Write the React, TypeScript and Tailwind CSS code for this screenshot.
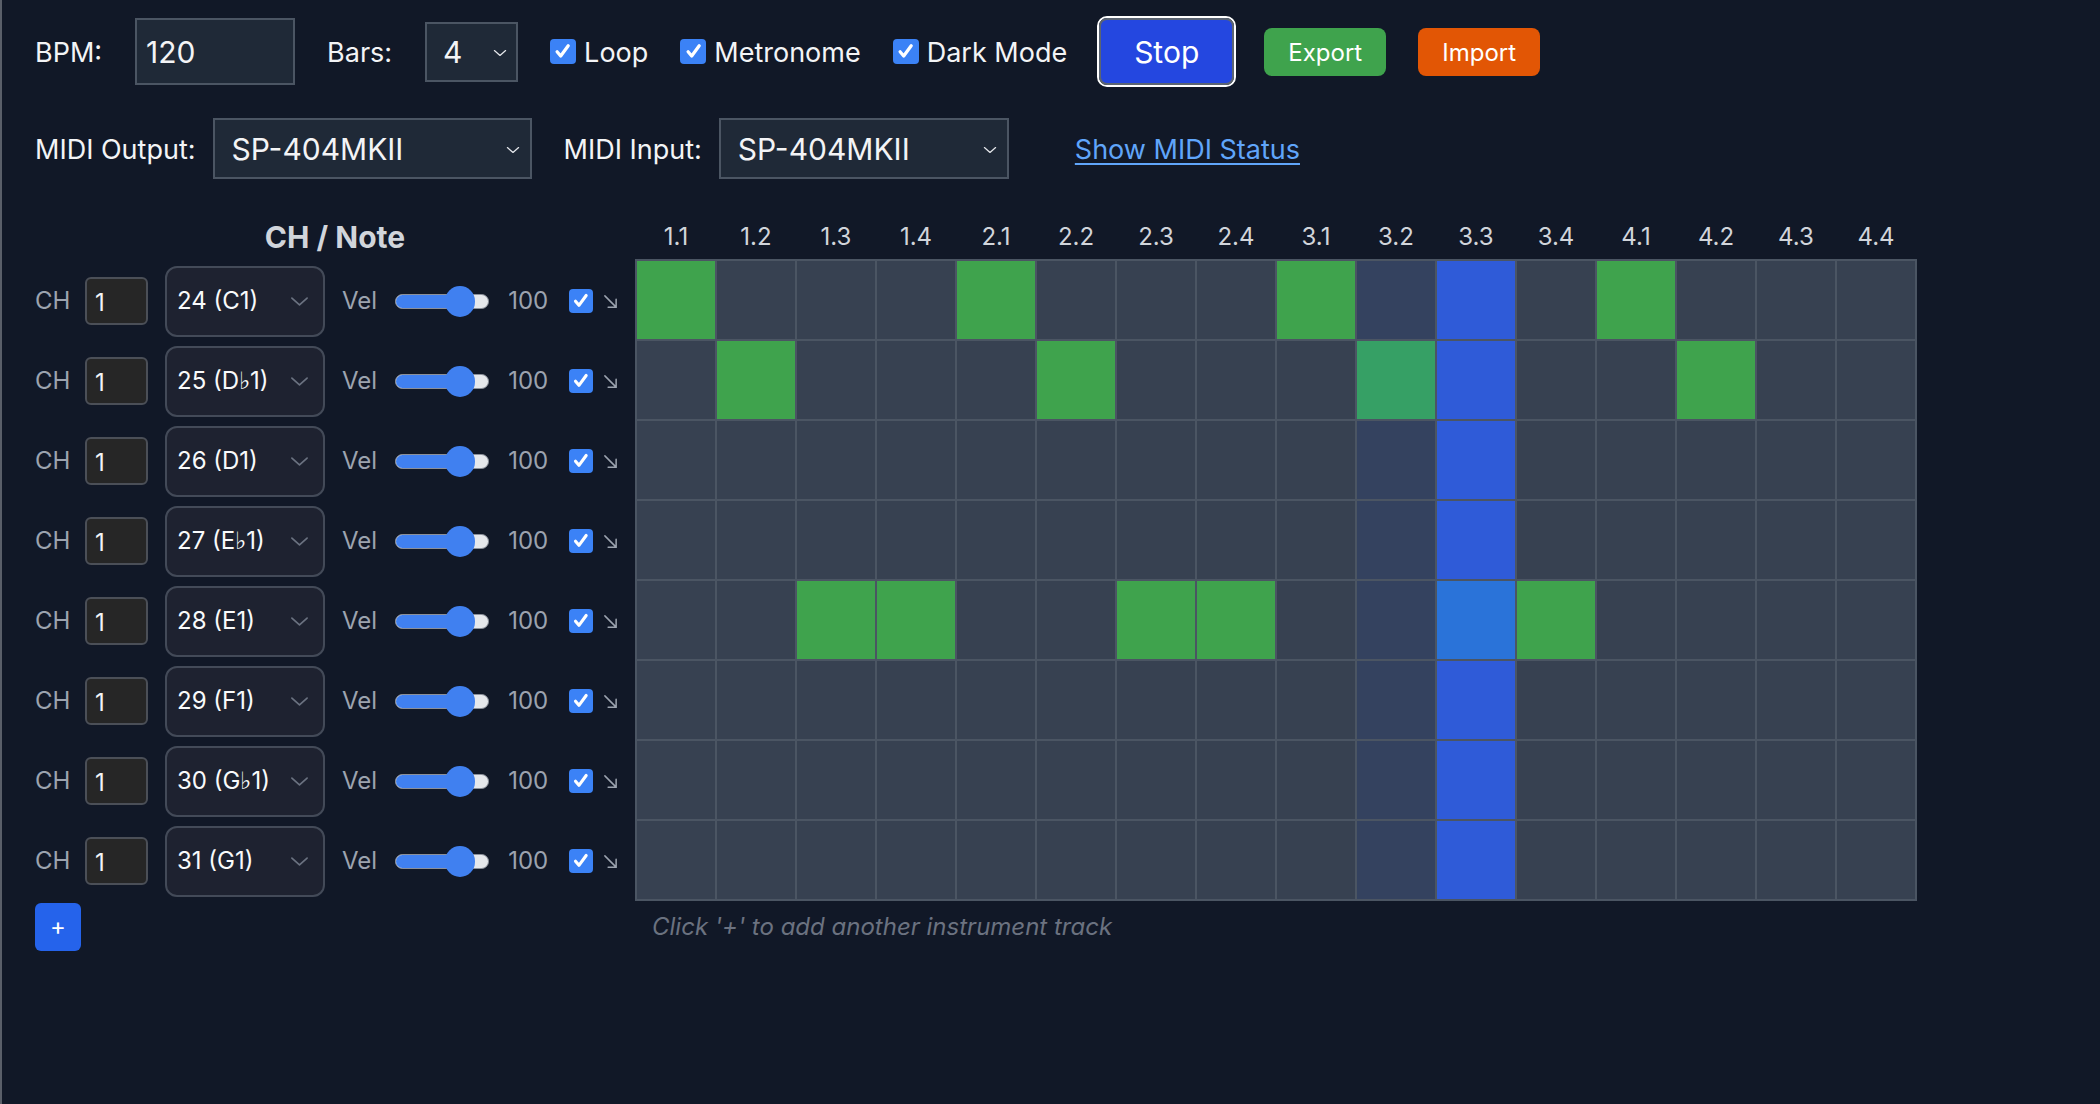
import { useState } from "react";

const COLS = [
  "1.1", "1.2", "1.3", "1.4",
  "2.1", "2.2", "2.3", "2.4",
  "3.1", "3.2", "3.3", "3.4",
  "4.1", "4.2", "4.3", "4.4",
];

const TRACKS = [
  { note: "24 (C1)", steps: [0, 4, 8, 12] },
  { note: "25 (D♭1)", steps: [1, 5, 9, 13] },
  { note: "26 (D1)", steps: [] },
  { note: "27 (E♭1)", steps: [] },
  { note: "28 (E1)", steps: [2, 3, 6, 7, 10, 11] },
  { note: "29 (F1)", steps: [] },
  { note: "30 (G♭1)", steps: [] },
  { note: "31 (G1)", steps: [] },
];

const PLAYHEAD = 10;

function cellColor(active: boolean, col: number) {
  if (col === PLAYHEAD) return active ? "bg-[#2a73d9]" : "bg-[#2f5bd8]";
  if (col === PLAYHEAD - 1) return active ? "bg-[#36a065]" : "bg-[#34425f]";
  return active ? "bg-[#3fa34d]" : "bg-[#374151]";
}

function Check({ className }: { className: string }) {
  return (
    <span
      className={`flex shrink-0 items-center justify-center rounded-[4px] bg-[#3b82f6] ${className}`}
    >
      <svg viewBox="0 0 24 24" className="h-[82%] w-[82%]" fill="none" stroke="white" strokeWidth="3.8" strokeLinecap="round" strokeLinejoin="round">
        <path d="M5.5 12.5l4.2 5L18.5 5.5" />
      </svg>
    </span>
  );
}

function Chevron({ className, color }: { className: string; color: string }) {
  return (
    <svg viewBox="0 0 20 11" className={className} fill="none" stroke={color} strokeWidth="1.8" strokeLinecap="round" strokeLinejoin="round">
      <path d="M2 2l8 7 8-7" />
    </svg>
  );
}

function VelSlider({ value }: { value: number }) {
  // 94px track, 30px thumb
  const left = Math.round((value / 127) * 64);
  return (
    <div className="relative ml-[18px] flex h-[31px] w-[94px] items-center">
      <div className="relative h-[15px] w-full overflow-hidden rounded-full border border-[#8b909a] bg-[#e5e7eb]">
        <div className="absolute inset-y-0 left-0 bg-[#4080f0]" style={{ width: left + 15 }} />
      </div>
      <div className="absolute top-0 h-[31px] w-[30px] rounded-full bg-[#4080f0]" style={{ left }} />
    </div>
  );
}

function TrackRow({ note }: { note: string }) {
  return (
    <div className="flex h-[80px] items-center pt-[2px] text-[24px]">
      <span className="w-[50px] text-[#9ca3af]">CH</span>
      <div className="flex h-[48px] w-[63px] items-center rounded-[6px] border-2 border-[#4b4f57] bg-[#262626] pl-[8px] pt-[3px] text-[#f3f4f6]">
        1
      </div>
      <div className="ml-[17px] flex h-[71px] w-[160px] items-center justify-between rounded-[12px] border-2 border-[#434a58] bg-[#1e2230] pl-[10px] pr-[14px] text-[#f9fafb]">
        <span>{note}</span>
        <Chevron className="h-[11px] w-[19px]" color="#6b7280" />
      </div>
      <span className="ml-[17px] text-[#9ca3af]">Vel</span>
      <VelSlider value={100} />
      <span className="ml-[19px] text-[#9ca3af]">100</span>
      <Check className="ml-[21px] h-[24px] w-[24px]" />
      <svg viewBox="0 0 16 16" className="ml-[10px] h-[15px] w-[15px]" fill="none" stroke="#9ca3af" strokeWidth="1.6" strokeLinecap="round">
        <path d="M2 2l12 12M14 5.5V14H5.5" />
      </svg>
    </div>
  );
}

export default function App() {
  const [playing] = useState(true);

  return (
    <div className="min-h-screen w-full border-l-2 border-[#5a5f69] bg-[#111827] pl-[33px] pt-[16px] font-[family-name:Inter,sans-serif] text-[#f3f4f6]">
      {/* transport row */}
      <div className="flex h-[71px] items-center text-[27px]">
        <span className="pt-[4px]">BPM:</span>
        <div className="ml-[33px] flex h-[67px] w-[160px] items-center border-2 border-[#4b5563] bg-[#1f2937] pl-[9px] pt-[2px] text-[30px]">
          120
        </div>
        <span className="ml-[32px] pt-[4px]">Bars:</span>
        <div className="ml-[33px] flex h-[60px] w-[93px] items-center justify-between border-2 border-[#4b5563] bg-[#1f2937] pl-[16px] pr-[9px] pt-[2px] text-[30px]">
          <span>4</span>
          <Chevron className="h-[8px] w-[14px]" color="#e5e7eb" />
        </div>
        <Check className="ml-[32px] h-[25px] w-[26px]" />
        <span className="ml-[8px] pt-[4px]">Loop</span>
        <Check className="ml-[32px] h-[25px] w-[26px]" />
        <span className="ml-[8px] pt-[4px]">Metronome</span>
        <Check className="ml-[32px] h-[25px] w-[26px]" />
        <span className="ml-[8px] pt-[4px]">Dark Mode</span>
        <button className="ml-[30px] h-[71px] w-[139px] rounded-[10px] border-2 border-white p-0">
          <span className="flex h-full w-full items-center justify-center rounded-[8px] border-2 border-[#5b6472] bg-[#2447e0] pt-[2px] text-[30px] text-white">
            {playing ? "Stop" : "Play"}
          </span>
        </button>
        <button className="ml-[28px] flex h-[48px] w-[122px] items-center justify-center rounded-[8px] bg-[#3fa34d] pt-[2px] text-[24px] text-white">
          Export
        </button>
        <button className="ml-[32px] flex h-[48px] w-[122px] items-center justify-center rounded-[8px] bg-[#e25605] pt-[2px] text-[24px] text-white">
          Import
        </button>
      </div>

      {/* midi row */}
      <div className="mt-[31px] flex h-[61px] items-center text-[27px]">
        <span className="pt-[4px]">MIDI Output:</span>
        <div className="ml-[17px] flex h-[61px] w-[319px] items-center justify-between border-2 border-[#4b5563] bg-[#1f2937] pl-[17px] pr-[10px] pt-[2px] text-[30px]">
          <span>SP-404MKII</span>
          <Chevron className="h-[8px] w-[14px]" color="#e5e7eb" />
        </div>
        <span className="ml-[32px] pt-[4px]">MIDI Input:</span>
        <div className="ml-[17px] flex h-[61px] w-[290px] items-center justify-between border-2 border-[#4b5563] bg-[#1f2937] pl-[17px] pr-[10px] pt-[2px] text-[30px]">
          <span>SP-404MKII</span>
          <Chevron className="h-[8px] w-[14px]" color="#e5e7eb" />
        </div>
        <a className="ml-[66px] cursor-pointer pt-[4px] text-[#60a5fa] underline underline-offset-4">Show MIDI Status</a>
      </div>

      {/* sequencer */}
      <div className="mt-[36px] flex">
        <div className="flex w-[600px] flex-col">
          <div className="flex h-[44px] items-center justify-center text-[30px] font-bold text-[#d1d5db]">
            CH / Note
          </div>
          <div className="mt-px flex flex-col">
            {TRACKS.map((t) => (
              <TrackRow key={t.note} note={t.note} />
            ))}
          </div>
          <button className="mt-[3px] flex h-[48px] w-[46px] items-center justify-center rounded-[6px] bg-[#2563eb] text-[24px] text-white">
            +
          </button>
        </div>

        <div className="flex flex-col">
          <div className="flex h-[44px] items-center pl-px text-[24px] text-[#d1d5db]">
            {COLS.map((c) => (
              <span key={c} className="w-[80px] text-center">
                {c}
              </span>
            ))}
          </div>
          <div className="flex flex-col border border-[#4b5563]">
            {TRACKS.map((t) => (
              <div key={t.note} className="flex">
                {COLS.map((c, i) => (
                  <div
                    key={c}
                    className={`h-[80px] w-[80px] border border-[#4b5563] ${cellColor(t.steps.includes(i), i)}`}
                  />
                ))}
              </div>
            ))}
          </div>
          <p className="ml-[17px] mt-[8px] text-[24px] italic text-[#6b7280]">
            Click '+' to add another instrument track
          </p>
        </div>
      </div>
    </div>
  );
}
